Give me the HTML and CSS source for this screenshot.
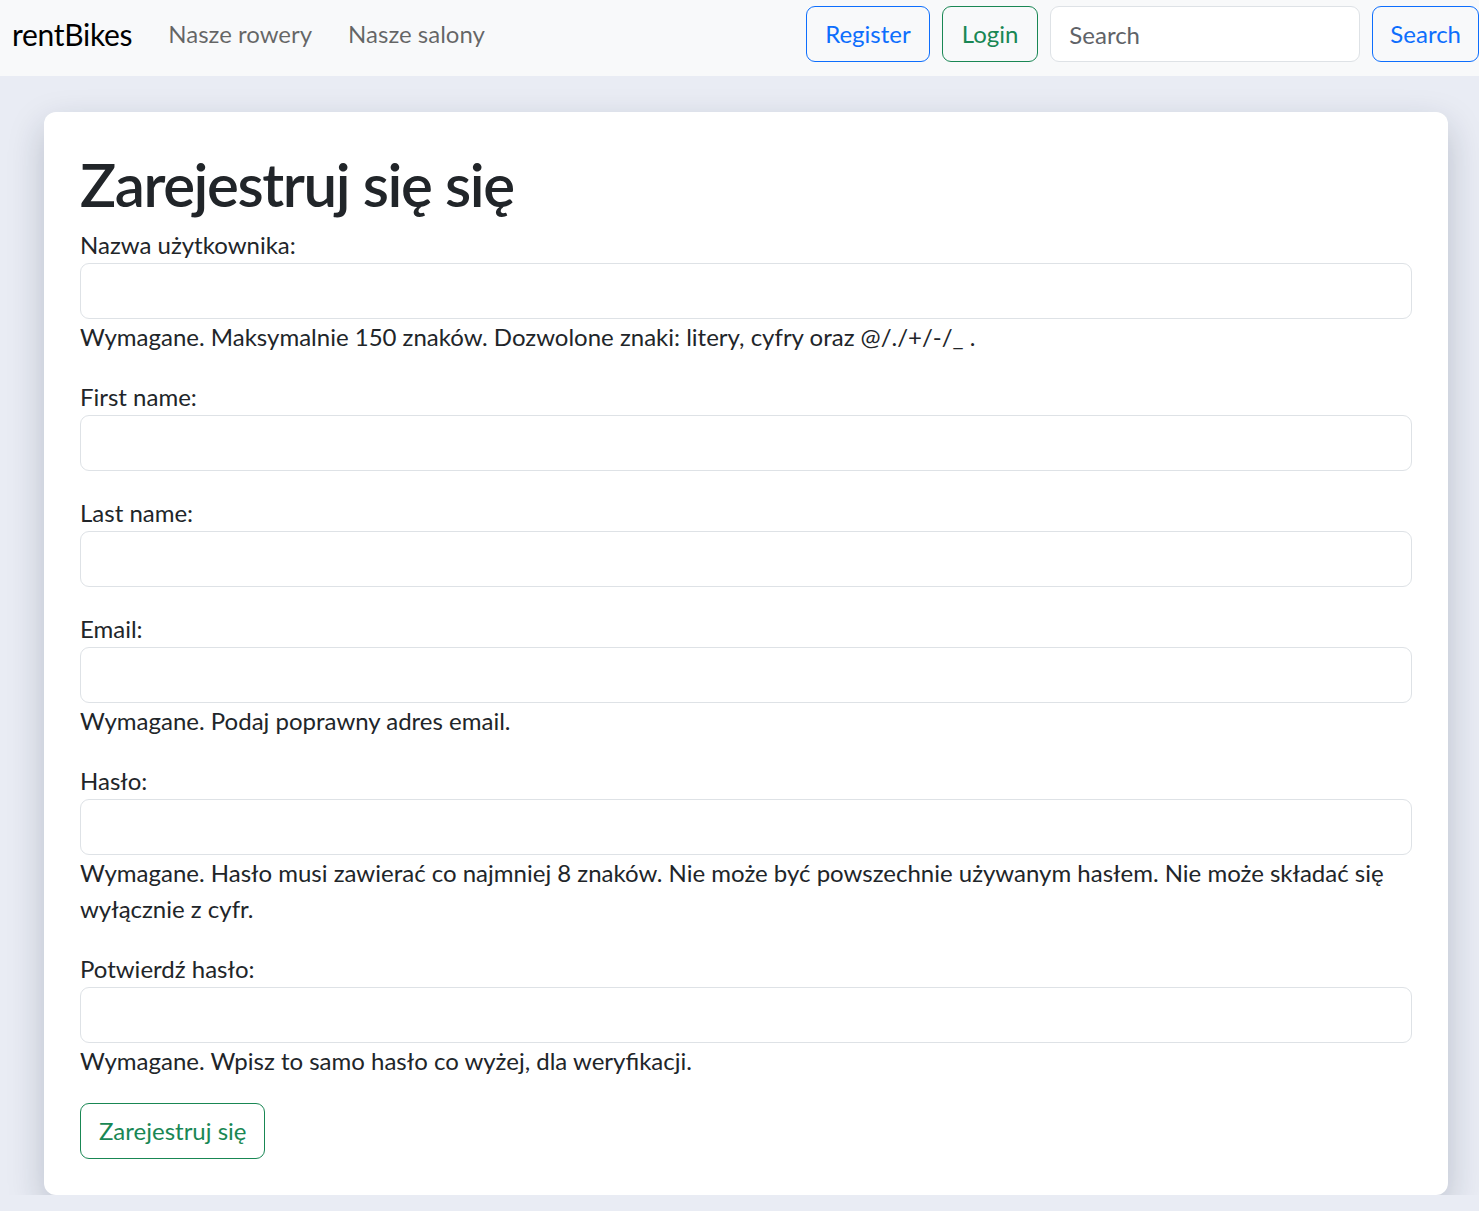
FILE: index.html
```html
<!DOCTYPE html>
<html lang="pl">
<head>
<meta charset="utf-8">
<title>rentBikes - Zarejestruj się</title>
<link rel="stylesheet" href="styles.css">
</head>
<body>
<nav class="navbar">
  <a class="brand" href="#">rentBikes</a>
  <ul class="nav-links">
    <li><a class="nav-link" href="#">Nasze rowery</a></li>
    <li><a class="nav-link" href="#">Nasze salony</a></li>
  </ul>
  <div class="nav-right">
    <a class="btn btn-primary" href="#">Register</a>
    <a class="btn btn-success btn-login" href="#">Login</a>
    <form class="search-form">
      <input class="search-input" type="search" placeholder="Search">
      <button class="btn btn-primary btn-search" type="submit">Search</button>
    </form>
  </div>
</nav>
<main class="page">
  <section class="card">
    <h1 class="title">Zarejestruj się się</h1>
    <form class="reg-form">
      <p class="field">
        <label for="u">Nazwa użytkownika:</label>
        <input class="form-control" id="u" type="text">
        <span class="helptext">Wymagane. Maksymalnie 150 znaków. Dozwolone znaki: litery, cyfry oraz @/./+/-/_ .</span>
      </p>
      <p class="field">
        <label for="f">First name:</label>
        <input class="form-control" id="f" type="text">
      </p>
      <p class="field">
        <label for="l">Last name:</label>
        <input class="form-control" id="l" type="text">
      </p>
      <p class="field">
        <label for="e">Email:</label>
        <input class="form-control" id="e" type="email">
        <span class="helptext">Wymagane. Podaj poprawny adres email.</span>
      </p>
      <p class="field">
        <label for="p1">Hasło:</label>
        <input class="form-control" id="p1" type="password">
        <span class="helptext">Wymagane. Hasło musi zawierać co najmniej 8 znaków. Nie może być powszechnie używanym hasłem. Nie może składać się wyłącznie z cyfr.</span>
      </p>
      <p class="field">
        <label for="p2">Potwierdź hasło:</label>
        <input class="form-control" id="p2" type="password">
        <span class="helptext">Wymagane. Wpisz to samo hasło co wyżej, dla weryfikacji.</span>
      </p>
      <button class="btn btn-success" type="submit">Zarejestruj się</button>
    </form>
  </section>
</main>
</body>
</html>
```
FILE: styles.css
```css
* { box-sizing: border-box; }
html, body { margin: 0; padding: 0; }
body {
  font-family: "Segoe UI", Lato, Roboto, "Noto Sans", sans-serif;
  font-size: 24px;
  line-height: 1.5;
  color: #212529;
  background: #e9ecf4;
  overflow: hidden;
}
a { text-decoration: none; }

.navbar {
  display: flex;
  align-items: center;
  height: 76px;
  padding: 0 0 8px 12px;
  background: #f8f9fa;
}
.brand {
  font-size: 30px;
  letter-spacing: -0.3px;
  color: #000;
  margin-right: 18px;
  line-height: 45px;
}
.nav-links {
  display: flex;
  list-style: none;
  margin: 0;
  padding: 0;
}
.nav-link {
  display: block;
  padding: 9px 18px;
  color: rgba(0,0,0,.6);
}
.nav-right {
  margin-left: auto;
  display: flex;
  align-items: center;
  gap: 12px;
}
.search-form {
  display: flex;
  gap: 12px;
  margin: 0;
}
.btn {
  display: inline-block;
  height: 56px;
  padding: 0 18px;
  font: inherit;
  line-height: 54px;
  background: transparent;
  border: 1px solid;
  border-radius: 9px;
  cursor: pointer;
}
.btn-login { padding: 0 19px; }
.btn-search { padding: 0 17px; }
.btn-primary { color: #0d6efd; border-color: #0d6efd; }
.btn-success { color: #198754; border-color: #198754; }
.search-input {
  width: 310px;
  height: 56px;
  padding: 0 18px;
  font: inherit;
  color: #212529;
  background: #fff;
  border: 1px solid #dee2e6;
  border-radius: 9px;
}
.search-input::placeholder { color: #5f6368; }

.page {
  padding: 36px 31px 0 44px;
}
.card {
  background: #fff;
  border-radius: 12px;
  padding: 36px;
  box-shadow: 0 14px 36px rgba(20,30,60,.22);
}
.title {
  margin: 0 0 7px;
  font-size: 60px;
  font-weight: 600;
  letter-spacing: -1.4px;
  line-height: 72px;
}
.reg-form { margin: 0; }
.field { margin: 0 0 24px; }
.field label { display: block; }
.form-control {
  display: block;
  width: 100%;
  height: 56px;
  padding: 0 18px;
  font: inherit;
  border: 1px solid #dee2e6;
  border-radius: 9px;
  background: #fff;
}
.helptext { display: block; }
```
